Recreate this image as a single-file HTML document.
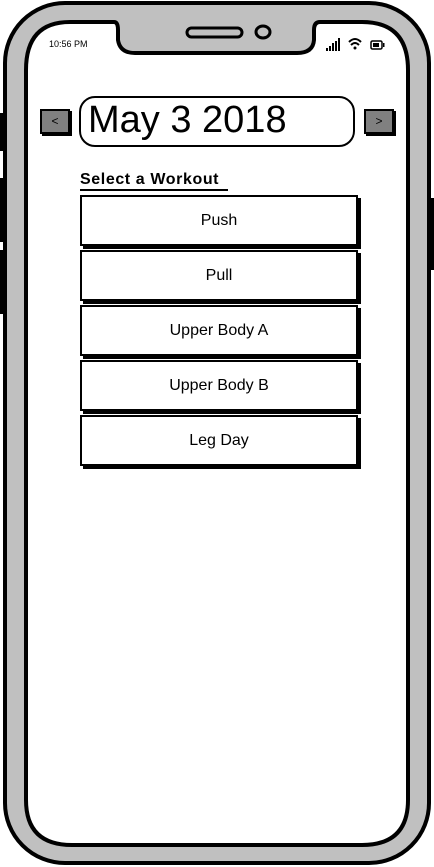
<!DOCTYPE html>
<html><head><style>
body{margin:0;width:434px;height:867px;overflow:hidden;background:#fff;position:relative;font-family:"Liberation Sans",sans-serif}
.btn{position:absolute;left:80px;width:274px;height:47px;border:2px solid #000;box-shadow:3px 3px 0 #000;background:#fff;text-align:center;line-height:47px;font-size:16px;color:#000}
.arr{position:absolute;top:109px;width:26px;height:21px;background:#808080;border:2px solid #000;box-shadow:2px 2px 0 #000;font-size:12px;line-height:21px;text-align:center}
</style></head><body>
<svg width="434" height="867" style="position:absolute;left:0;top:0">
<rect x="0" y="113" width="7" height="38" fill="#000"/>
<rect x="0" y="178" width="7" height="64" fill="#000"/>
<rect x="0" y="250" width="7" height="64" fill="#000"/>
<rect x="427" y="198" width="7" height="72" fill="#000"/>
<rect x="5" y="3" width="424" height="860" rx="60" fill="#c0c0c0" stroke="#000" stroke-width="4"/>
<path d="M70 22 L114 22 Q118 22 118 30 L118 40 Q120 53 135 53 L297 53 Q313 53 314 40 L314 30 Q314 22 320 22 L362 22 Q408 22 408 70 L408 800 Q408 845 362 845 L72 845 Q26 845 26 800 L26 70 Q26 22 70 22 Z" fill="#fff" stroke="#000" stroke-width="4"/>
<rect x="187" y="28" width="55" height="9" rx="4.5" fill="#c0c0c0" stroke="#000" stroke-width="3"/>
<ellipse cx="263" cy="32" rx="7" ry="6" fill="#c0c0c0" stroke="#000" stroke-width="3"/>
<rect x="326" y="48" width="2" height="3" fill="#000"/><rect x="329" y="46" width="2" height="5" fill="#000"/><rect x="332" y="43" width="2" height="8" fill="#000"/><rect x="335" y="41" width="2" height="10" fill="#000"/><rect x="338" y="38" width="2" height="13" fill="#000"/>
<path d="M349 42 Q355 36 361 42 M351 45 Q355 41 359 45" stroke="#000" stroke-width="2" fill="none"/><circle cx="355" cy="48" r="1.5"/>
<rect x="371" y="41" width="11" height="8" rx="1.5" fill="none" stroke="#000" stroke-width="1.5"/><rect x="373" y="43" width="6" height="4"/><rect x="383" y="43" width="1.5" height="4"/>
<rect x="80" y="97" width="274" height="49" rx="15" fill="#fff" stroke="#000" stroke-width="2"/>
<line x1="80" y1="190" x2="228" y2="190" stroke="#000" stroke-width="2"/>
</svg>
<div style="position:absolute;left:49px;top:39px;font-size:9px">10:56 PM</div>
<div style="position:absolute;left:88px;top:97px;font-size:38px;line-height:46px">May 3 2018</div>
<div class="arr" style="left:40px">&lt;</div>
<div class="arr" style="left:364px">&gt;</div>
<div style="position:absolute;left:80px;top:171px;font-size:16px;font-weight:bold;letter-spacing:0.6px">Select a Workout</div>
<div class="btn" style="top:195px">Push</div>
<div class="btn" style="top:250px">Pull</div>
<div class="btn" style="top:305px">Upper Body A</div>
<div class="btn" style="top:360px">Upper Body B</div>
<div class="btn" style="top:415px">Leg Day</div>
</body></html>
